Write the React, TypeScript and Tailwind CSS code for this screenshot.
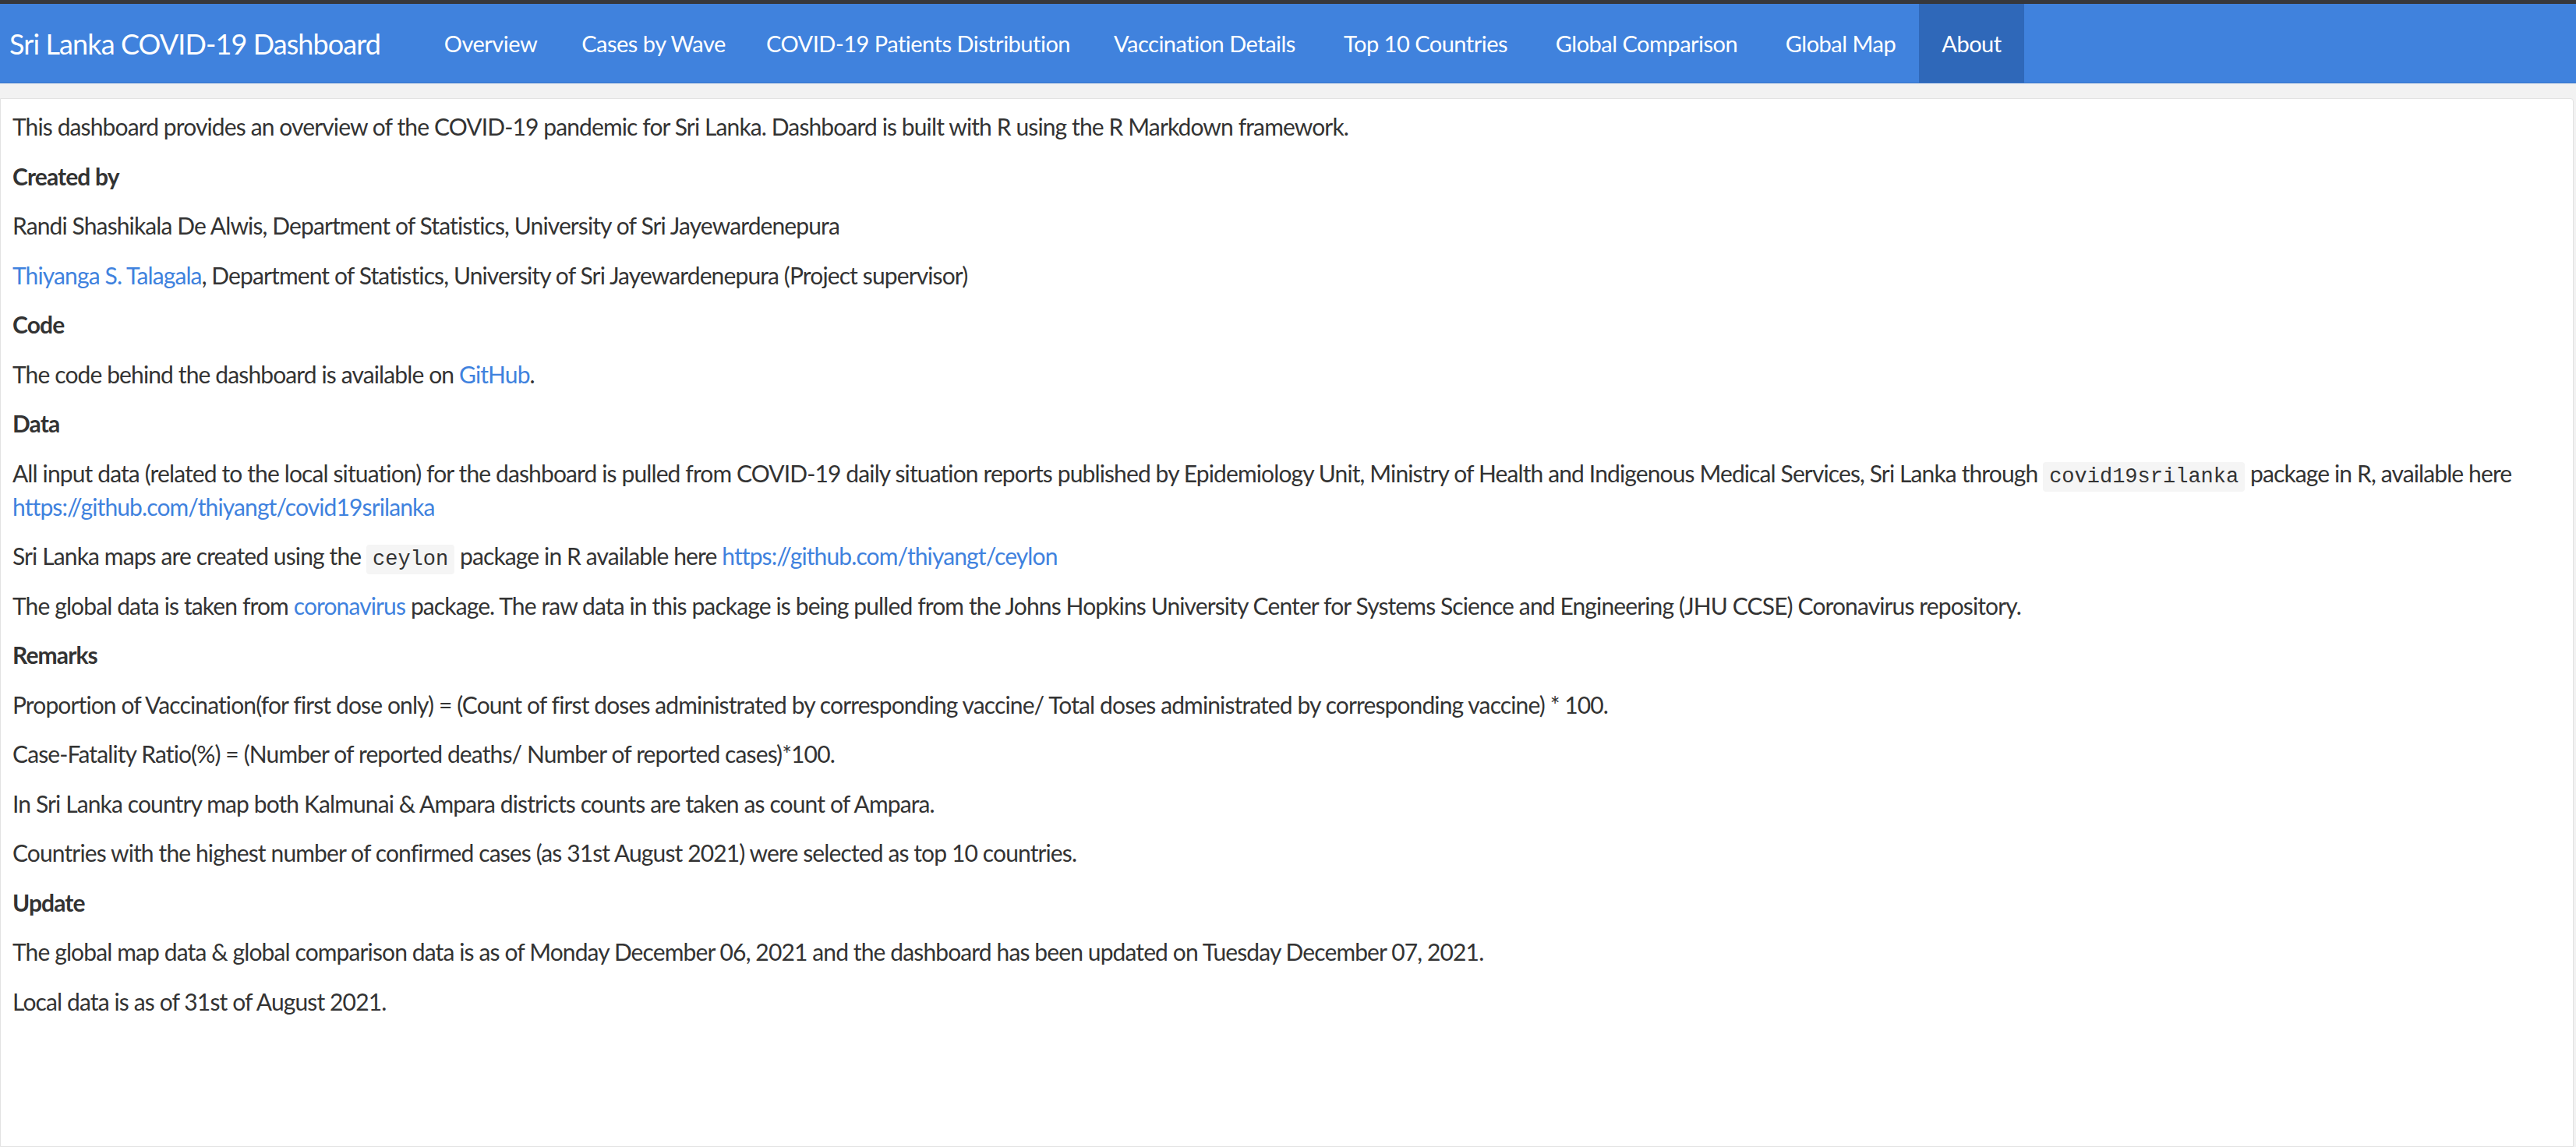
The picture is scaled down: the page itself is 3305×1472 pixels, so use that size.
import React from "react";

const navItems: { label: string; w: string; active?: boolean }[] = [
  { label: "Overview", w: "w-[177px]" },
  { label: "Cases by Wave", w: "w-[241px]" },
  { label: "COVID-19 Patients Distribution", w: "w-[438px]" },
  { label: "Vaccination Details", w: "w-[297px]" },
  { label: "Top 10 Countries", w: "w-[270px]" },
  { label: "Global Comparison", w: "w-[297px]" },
  { label: "Global Map", w: "w-[201px]" },
  { label: "About", w: "w-[135px]", active: true },
];

function A({ children }: { children: React.ReactNode }) {
  return <a className="text-[#3f82de] no-underline">{children}</a>;
}

function Code({ children }: { children: React.ReactNode }) {
  return (
    <code className="bg-[#f5f5f5] text-[#333333] rounded-[4px] px-[8px] py-[4px] text-[27px] leading-none tracking-normal font-['Liberation_Mono',monospace]">
      {children}
    </code>
  );
}

function P({ children, bold }: { children: React.ReactNode; bold?: boolean }) {
  return (
    <p className={"mb-[20.5px] leading-[43px] " + (bold ? "font-bold" : "")}>{children}</p>
  );
}

export default function App() {
  return (
    <div className="min-h-screen bg-[#f2f2f2] font-['Lato',sans-serif] flex flex-col">
      <div className="h-[5px] bg-[#37383c]" />
      <nav className="h-[102px] bg-[#4082dd] border-b border-[#3874c8] flex items-stretch text-white">
        <div className="w-[541px] pl-[12px] flex items-center text-[36px] tracking-[-0.9px]">
          Sri Lanka COVID-19 Dashboard
        </div>
        {navItems.map((n) => (
          <div
            key={n.label}
            className={
              n.w +
              " flex items-center justify-center text-[29px] tracking-[-0.5px] " +
              (n.active ? "bg-[#2f68b9]" : "")
            }
          >
            {n.label}
          </div>
        ))}
      </nav>
      <div className="flex-1 flex flex-col pt-[19px] pr-[3px]">
        <div className="flex-1 bg-white border border-[#e2e2e2] rounded-tr-[4px] pt-[14px] px-[15px] text-[30px] text-[#333333] tracking-[-0.88px]">
          <P>
            This dashboard provides an overview of the COVID-19 pandemic for Sri Lanka. Dashboard is built with R using the R Markdown framework.
          </P>
          <P bold>Created by</P>
          <P>Randi Shashikala De Alwis, Department of Statistics, University of Sri Jayewardenepura</P>
          <P>
            <A>Thiyanga S. Talagala</A>, Department of Statistics, University of Sri Jayewardenepura (Project supervisor)
          </P>
          <P bold>Code</P>
          <P>
            The code behind the dashboard is available on <A>GitHub</A>.
          </P>
          <P bold>Data</P>
          <P>
            All input data (related to the local situation) for the dashboard is pulled from COVID-19 daily situation reports published by Epidemiology Unit, Ministry of Health and Indigenous Medical Services, Sri Lanka through <Code>covid19srilanka</Code> package in R, available here{" "}
            <A>https://github.com/thiyangt/covid19srilanka</A>
          </P>
          <P>
            Sri Lanka maps are created using the <Code>ceylon</Code> package in R available here <A>https://github.com/thiyangt/ceylon</A>
          </P>
          <P>
            The global data is taken from <A>coronavirus</A> package. The raw data in this package is being pulled from the Johns Hopkins University Center for Systems Science and Engineering (JHU CCSE) Coronavirus repository.
          </P>
          <P bold>Remarks</P>
          <P>
            Proportion of Vaccination(for first dose only) = (Count of first doses administrated by corresponding vaccine/ Total doses administrated by corresponding vaccine) * 100.
          </P>
          <P>Case-Fatality Ratio(%) = (Number of reported deaths/ Number of reported cases)*100.</P>
          <P>In Sri Lanka country map both Kalmunai &amp; Ampara districts counts are taken as count of Ampara.</P>
          <P>Countries with the highest number of confirmed cases (as 31st August 2021) were selected as top 10 countries.</P>
          <P bold>Update</P>
          <P>
            The global map data &amp; global comparison data is as of Monday December 06, 2021 and the dashboard has been updated on Tuesday December 07, 2021.
          </P>
          <P>Local data is as of 31st of August 2021.</P>
        </div>
      </div>
    </div>
  );
}
